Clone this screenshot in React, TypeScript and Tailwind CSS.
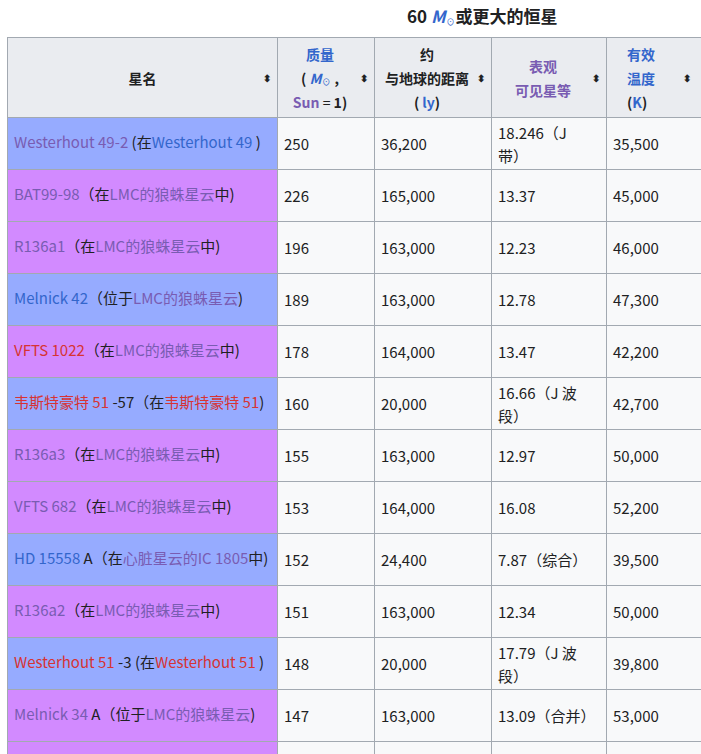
import React from 'react';

type Seg = [string, 'v' | 'b' | 'r' | 't'];
const C = { v: 'text-[#795cb2]', b: 'text-[#3366cc]', r: 'text-[#d73333]', t: 'text-[#202122]' };

const LMC: Seg[] = [['（在', 't'], ['LMC的狼蛛星云', 'v'], ['中)', 't']];
const rows: { bg: string; name: Seg[]; m: string; d: string; mag: string; k: string }[] = [
  { bg: 'b', name: [['Westerhout 49-2', 'v'], [' (在', 't'], ['Westerhout 49', 'b'], [' )', 't']], m: '250', d: '36,200', mag: '18.246（J 带）', k: '35,500' },
  { bg: 'v', name: [['BAT99-98', 'v'], ...LMC], m: '226', d: '165,000', mag: '13.37', k: '45,000' },
  { bg: 'v', name: [['R136a1', 'v'], ...LMC], m: '196', d: '163,000', mag: '12.23', k: '46,000' },
  { bg: 'b', name: [['Melnick 42', 'b'], ['（位于', 't'], ['LMC的狼蛛星云', 'v'], [')', 't']], m: '189', d: '163,000', mag: '12.78', k: '47,300' },
  { bg: 'v', name: [['VFTS 1022', 'r'], ...LMC], m: '178', d: '164,000', mag: '13.47', k: '42,200' },
  { bg: 'b', name: [['韦斯特豪特 51', 'r'], [' -57（在', 't'], ['韦斯特豪特 51', 'r'], [')', 't']], m: '160', d: '20,000', mag: '16.66（J 波段）', k: '42,700' },
  { bg: 'v', name: [['R136a3', 'v'], ...LMC], m: '155', d: '163,000', mag: '12.97', k: '50,000' },
  { bg: 'v', name: [['VFTS 682', 'v'], ...LMC], m: '153', d: '164,000', mag: '16.08', k: '52,200' },
  { bg: 'b', name: [['HD 15558', 'b'], [' A（在', 't'], ['心脏星云的IC 1805', 'v'], ['中)', 't']], m: '152', d: '24,400', mag: '7.87（综合）', k: '39,500' },
  { bg: 'v', name: [['R136a2', 'v'], ...LMC], m: '151', d: '163,000', mag: '12.34', k: '50,000' },
  { bg: 'b', name: [['Westerhout 51', 'r'], [' -3 (在', 't'], ['Westerhout 51', 'r'], [' )', 't']], m: '148', d: '20,000', mag: '17.79（J 波段）', k: '39,800' },
  { bg: 'v', name: [['Melnick 34', 'v'], [' A（位于', 't'], ['LMC的狼蛛星云', 'v'], [')', 't']], m: '147', d: '163,000', mag: '13.09（合并）', k: '53,000' },
  { bg: 'v', name: [['', 't']], m: '', d: '', mag: '', k: '' },
];

const Sort = () => <span className="absolute right-1.5 top-1/2 -translate-y-1/2 text-[10px] leading-none text-[#202122]">⬍</span>;

export default function App() {
  return (
    <div className="w-[701px] h-[754px] overflow-hidden bg-white text-[15px] text-[#202122]" style={{ fontFamily: '"Noto Sans CJK SC", "Noto Sans", sans-serif' }}>
      <div className="pt-[3px] pl-[407px] h-[37px] font-bold text-[17px]">
        60 <span className="italic text-[#3366cc]">M</span><sub className="text-[10px] font-normal text-[#3366cc]">☉</sub>或更大的恒星
      </div>
      <div className="pl-[7px]">
        <table className="border-collapse table-fixed w-[730px]">
          <colgroup>
            <col className="w-[270px]" /><col className="w-[97px]" /><col className="w-[117px]" /><col className="w-[115px]" /><col className="w-[131px]" />
          </colgroup>
          <thead>
            <tr className="h-[80px] bg-[#eaecf0] font-bold text-center text-[14px] leading-[24px]">
              <th className="relative border border-[#a2a9b1]">星名<Sort /></th>
              <th className="relative border border-[#a2a9b1] pr-3"><span className="text-[#3366cc]">质量</span><br />( <span className="italic text-[#3366cc]">M</span><sub className="text-[10px] font-normal text-[#3366cc]">☉</sub> ,<br /><span className="text-[#795cb2]">Sun</span> <span className="font-normal">=</span> 1)<Sort /></th>
              <th className="relative border border-[#a2a9b1] pr-3">约<br />与地球的距离<br />( <span className="text-[#3366cc]">ly</span>)<Sort /></th>
              <th className="relative border border-[#a2a9b1] pr-3 text-[#795cb2]">表观<br />可见星等<Sort /></th>
              <th className="relative border border-[#a2a9b1] text-left pl-5"><span className="text-[#3366cc]">有效<br />温度</span><br />(<span className="text-[#3366cc]">K</span>)<span className="absolute left-[76px] top-1/2 -translate-y-1/2 text-[10px]">⬍</span></th>
            </tr>
          </thead>
          <tbody>
            {rows.map((r, i) => (
              <tr key={i} className="h-[52px] bg-[#f8f9fa] leading-[23px]">
                <td className={`border border-[#a2a9b1] px-1.5 pb-1 ${r.bg === 'b' ? 'bg-[#96abff]' : 'bg-[#d28aff]'}`}>
                  {r.name.map((s, j) => <span key={j} className={C[s[1]]}>{s[0]}</span>)}
                </td>
                <td className="border border-[#a2a9b1] px-1.5">{r.m}</td>
                <td className="border border-[#a2a9b1] px-1.5">{r.d}</td>
                <td className="border border-[#a2a9b1] px-1.5 pr-4">{r.mag}</td>
                <td className="border border-[#a2a9b1] px-1.5">{r.k}</td>
              </tr>
            ))}
          </tbody>
        </table>
      </div>
    </div>
  );
}
